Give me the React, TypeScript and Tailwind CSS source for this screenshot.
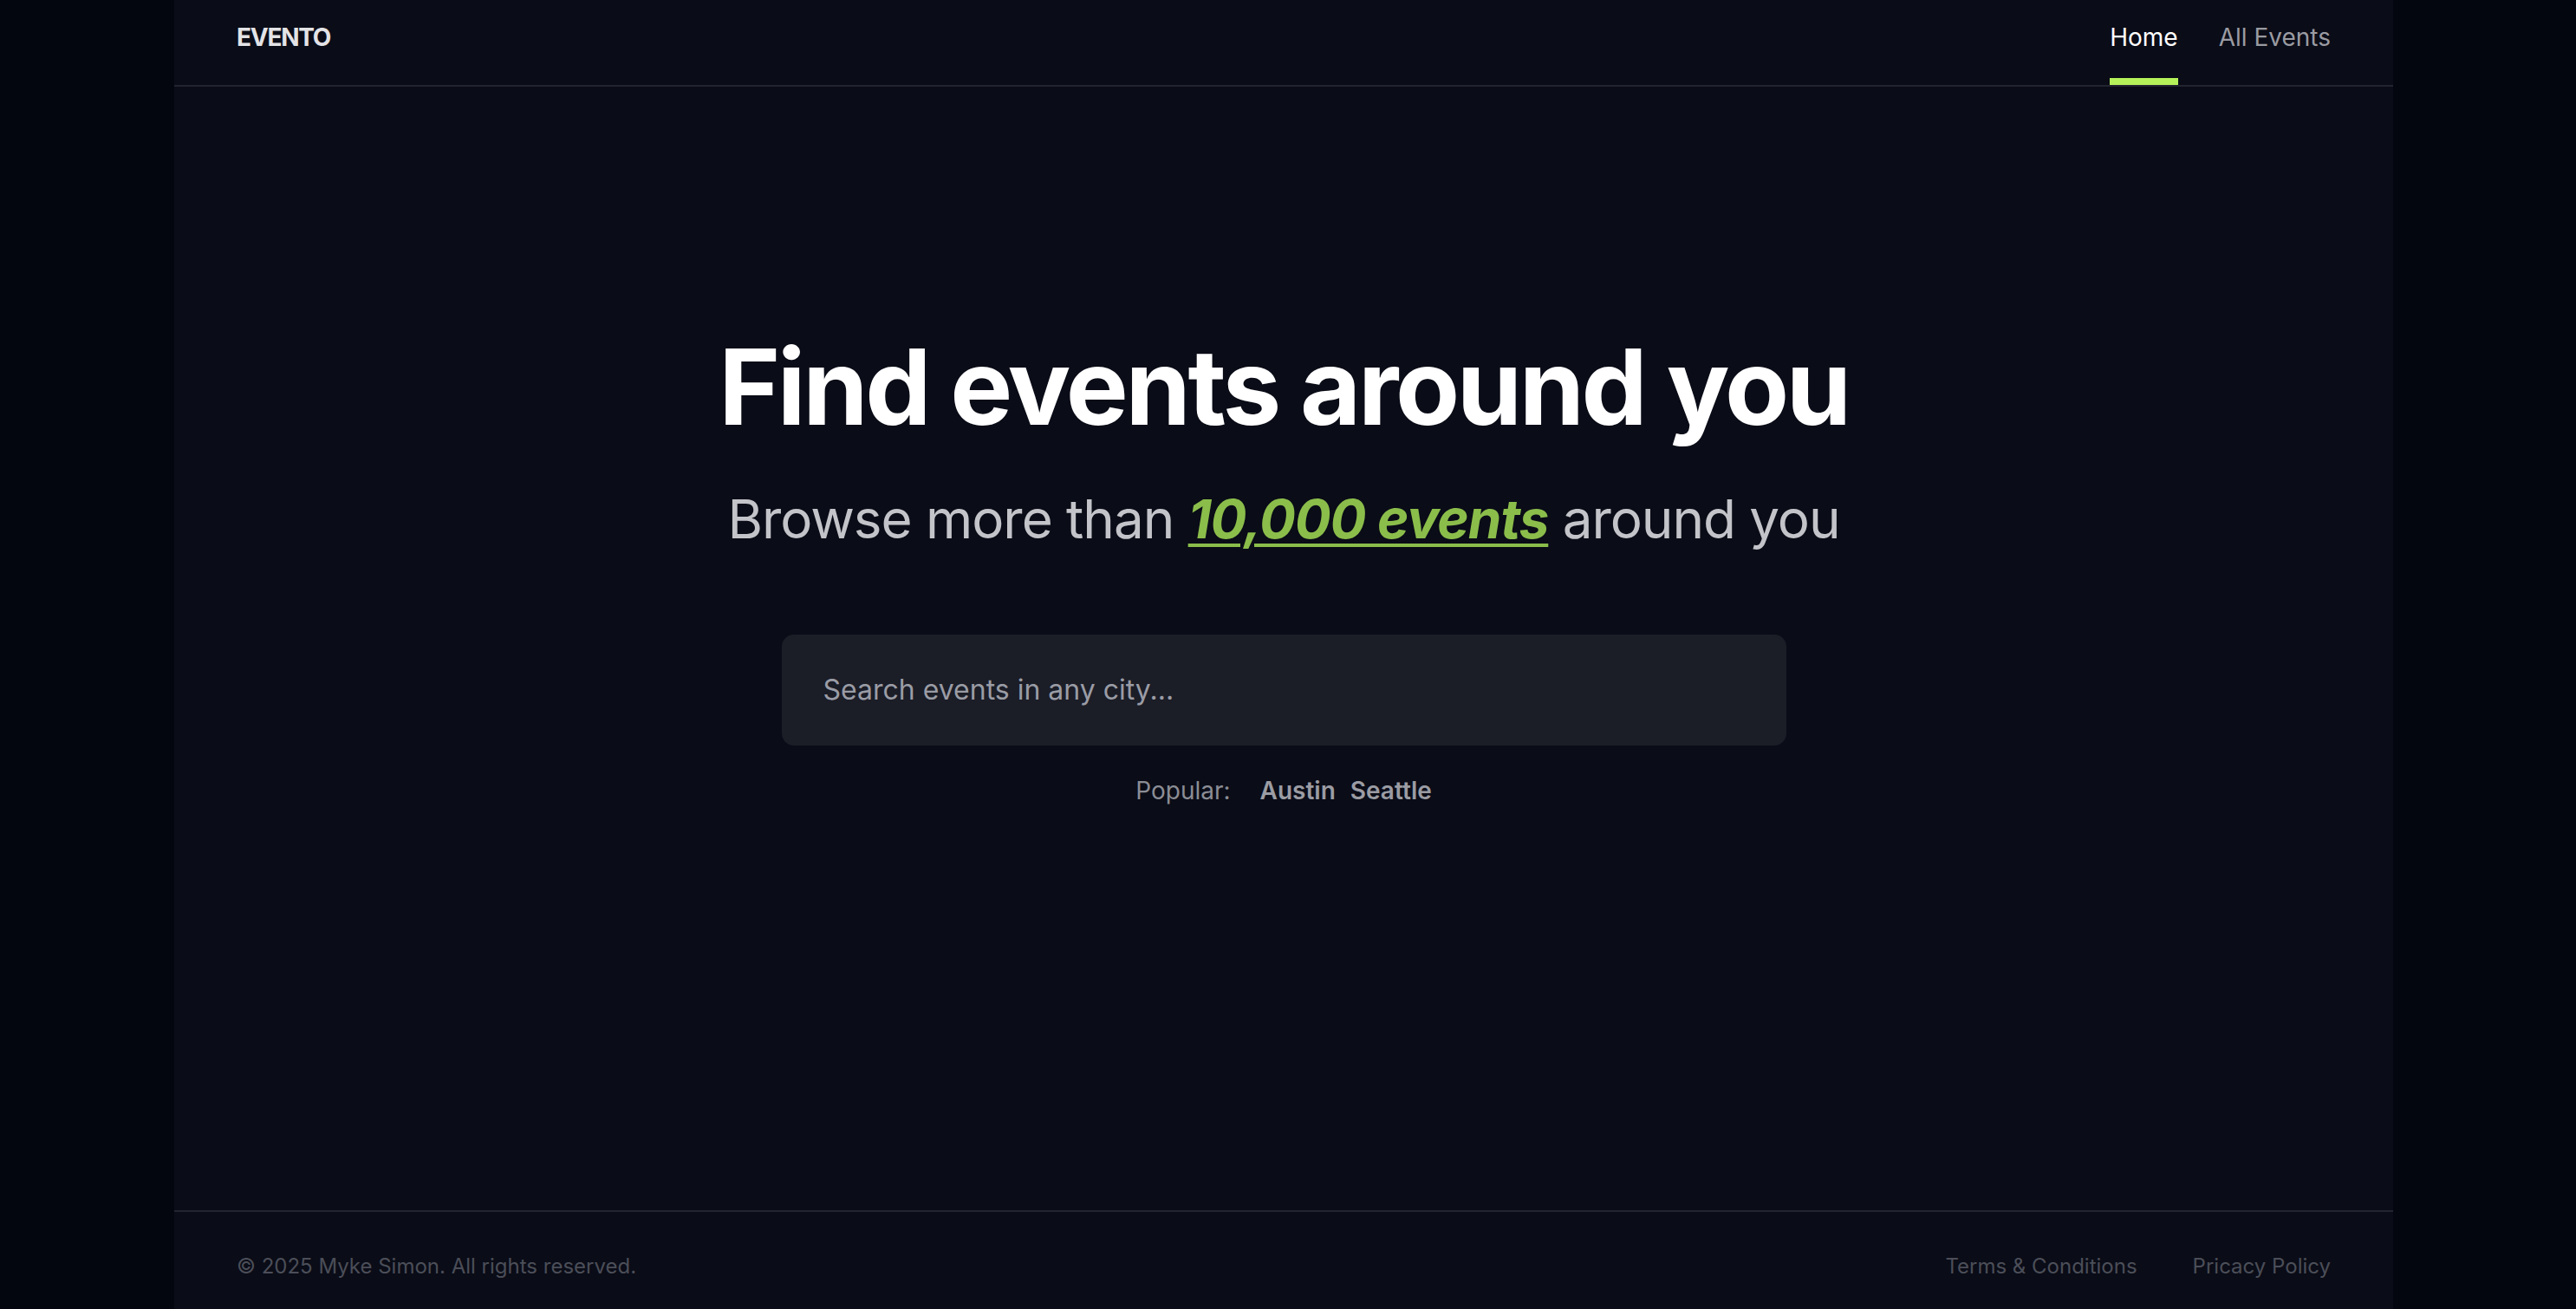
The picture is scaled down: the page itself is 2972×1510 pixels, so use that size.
export default function App() {
  return (
    <div className="min-h-screen w-full bg-[#04060f] font-['Inter',sans-serif]">
      <div className="ml-[201px] flex h-screen w-[2560px] flex-col bg-[#0a0c17]">
        <header className="flex h-[100px] shrink-0 items-stretch justify-between border-b-2 border-[#22252f] px-[72px]">
          <div className="pt-[29px] text-[28px] font-bold leading-none tracking-[-0.045em] text-[#e3e3e6]">EVENTO</div>
          <nav className="flex items-stretch gap-[47px] text-[28px] leading-none">
            <a className="relative pt-[29px] text-white">
              Home
              <span className="absolute bottom-0 left-0 right-0 h-[8px] bg-[#b5f25a]" />
            </a>
            <a className="pt-[29px] text-[#9a9ba2]">All Events</a>
          </nav>
        </header>

        <main className="flex flex-1 flex-col items-center pt-[286px]">
          <h1 className="text-[121px] font-bold leading-none tracking-[-0.028em] text-white">Find events around you</h1>
          <p className="mt-[61px] text-[62px] leading-none tracking-[-0.017em] text-[#c3c4c9]">
            Browse more than{" "}
            <span className="font-bold italic text-[#8bbd4b] underline decoration-[4px] underline-offset-[6px]">10,000 events</span>{" "}
            around you
          </p>
          <div className="mt-[102px] flex h-[128px] w-[1159px] items-center rounded-[14px] bg-[#1b1d27] px-[48px]">
            <span className="text-[32px] text-[#9a9ca5]">Search events in any city...</span>
          </div>
          <div className="mt-[31px] flex items-center text-[28px] leading-[42px]">
            <span className="text-[#8b8d95]">Popular:</span>
            <span className="ml-[34px] font-semibold text-[#9b9ca3]">Austin</span>
            <span className="ml-[17px] font-semibold text-[#9b9ca3]">Seattle</span>
          </div>
        </main>

        <footer className="flex h-[114px] shrink-0 items-start justify-between border-t-2 border-[#22252f] px-[72px] pt-[46px] text-[24px] leading-[33px] text-[#4b4e58]">
          <span>© 2025 Myke Simon. All rights reserved.</span>
          <div className="flex gap-[64px]">
            <a>Terms &amp; Conditions</a>
            <a>Pricacy Policy</a>
          </div>
        </footer>
      </div>
    </div>
  );
}
